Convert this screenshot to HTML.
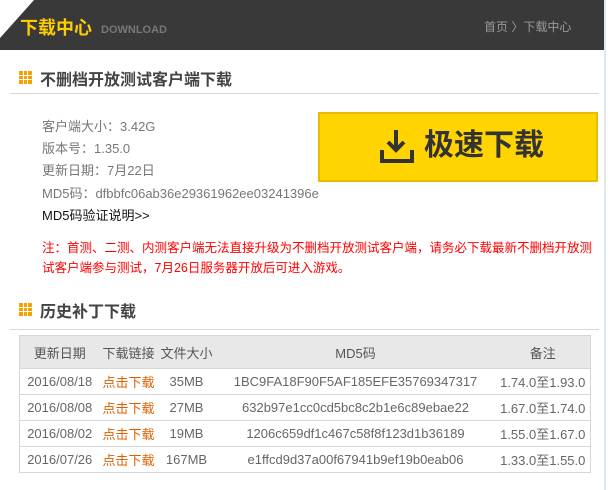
<!DOCTYPE html>
<html><head><meta charset="utf-8"><style>
body{margin:0;width:610px;height:490px;background:#fff;font-family:"Liberation Sans","Noto Sans CJK SC",sans-serif;position:relative;overflow:hidden}
.a{position:absolute;white-space:nowrap}
.hdr{left:0;top:0;width:604px;height:50px;background:#393939}
.tri{left:0;top:0;width:0;height:0;border-top:38px solid #fff;border-right:34px solid transparent}
.rb{left:604px;top:0;width:2px;height:490px;background:#dde8ef}
.ic{width:13px;height:13px;background:
linear-gradient(90deg,transparent 4px,#fff 4px,#fff 5px,transparent 5px,transparent 8px,#fff 8px,#fff 9px,transparent 9px),
linear-gradient(0deg,transparent 4px,#fff 4px,#fff 5px,transparent 5px,transparent 8px,#fff 8px,#fff 9px,transparent 9px),#f5a100}
.t{font-size:16px;font-weight:bold;color:#444}
.line{height:1px;background:#d8d8d8;left:10px;width:589px}
.i{left:42px;font-size:13px;color:#777}
.red{left:42px;font-size:12.5px;color:#f00}
table{position:absolute;left:19px;top:335px;width:572px;border-collapse:collapse;font-size:13px;color:#666;table-layout:fixed;border:1px solid #d6d6d6}
td,th{border-top:1px solid #d6d6d6;text-align:center;padding:0;white-space:nowrap;overflow:hidden}
th{background:#e8e8e8;font-weight:normal;color:#555;height:32px}
td{height:25px}
td.o{color:#e06000}
</style></head><body>
<div class="a hdr"></div>
<div class="a tri"></div>
<div class="a rb"></div>
<div class="a" style="left:20px;top:14px;font-size:18px;font-weight:bold;color:#ffcc00">下载中心</div>
<div class="a" style="left:101px;top:24px;font-size:11px;font-weight:bold;color:#777">DOWNLOAD</div>
<div class="a" style="left:484px;top:18px;font-size:12px;color:#999">首页 〉下载中心</div>

<div class="a ic" style="left:19px;top:71px"></div>
<div class="a t" style="left:40px;top:66px">不删档开放测试客户端下载</div>
<div class="a line" style="top:93px"></div>
<div class="a i" style="top:116px">客户端大小：3.42G</div>
<div class="a i" style="top:138px">版本号：1.35.0</div>
<div class="a i" style="top:160px">更新日期：7月22日</div>
<div class="a i" style="top:183px">MD5码：dfbbfc06ab36e29361962ee03241396e</div>
<div class="a i" style="top:205px;color:#111">MD5码验证说明&gt;&gt;</div>
<div class="a red" style="top:237px">注：首测、二测、内测客户端无法直接升级为不删档开放测试客户端，请务必下载最新不删档开放测</div>
<div class="a red" style="top:257px">试客户端参与测试，7月26日服务器开放后可进入游戏。</div>

<div class="a" style="left:318px;top:112px;width:280px;height:70px;background:#ffd400;box-shadow:inset 0 0 0 2px #e6bd00"></div>
<svg class="a" style="left:379px;top:128px" width="36" height="36" viewBox="0 0 36 36"><path d="M17 2v19M9 14l8 8 8-8M3 22v11h30V22" stroke="#333" stroke-width="4" fill="none"/></svg>
<div class="a" style="left:424px;top:128px;font-size:30px;font-weight:bold;color:#333;line-height:36px">极速下载</div>

<div class="a ic" style="left:19px;top:303px"></div>
<div class="a t" style="left:40px;top:298px">历史补丁下载</div>
<div class="a line" style="top:329px"></div>
<table>
<colgroup><col style="width:80px"><col style="width:58px"><col style="width:58px"><col style="width:280px"><col></colgroup>
<tr><th>更新日期</th><th>下载链接</th><th>文件大小</th><th>MD5码</th><th>备注</th></tr>
<tr><td>2016/08/18</td><td class="o">点击下载</td><td>35MB</td><td>1BC9FA18F90F5AF185EFE35769347317</td><td>1.74.0至1.93.0</td></tr>
<tr><td>2016/08/08</td><td class="o">点击下载</td><td>27MB</td><td>632b97e1cc0cd5bc8c2b1e6c89ebae22</td><td>1.67.0至1.74.0</td></tr>
<tr><td>2016/08/02</td><td class="o">点击下载</td><td>19MB</td><td>1206c659df1c467c58f8f123d1b36189</td><td>1.55.0至1.67.0</td></tr>
<tr><td>2016/07/26</td><td class="o">点击下载</td><td>167MB</td><td>e1ffcd9d37a00f67941b9ef19b0eab06</td><td>1.33.0至1.55.0</td></tr>
</table>
</body></html>
